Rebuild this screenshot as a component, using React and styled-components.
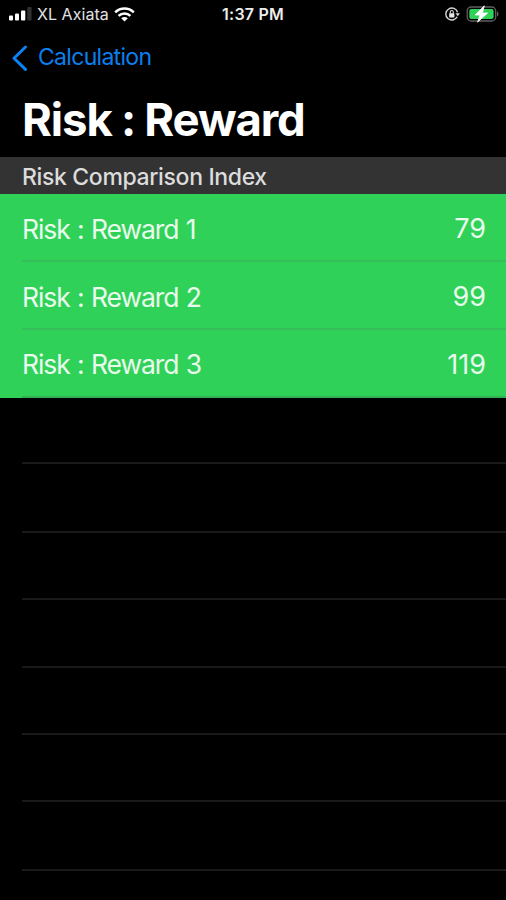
import React from 'react';
import styled, { createGlobalStyle } from 'styled-components';

const GlobalStyle = createGlobalStyle`
    body {
        margin: 0;
        background: #000;
        font-family: Inter, 'Liberation Sans', sans-serif;
    }
`

const Screen = styled.div`
    display: flex;
    flex-direction: column;
    width: 506px;
    height: 900px;
    overflow: hidden;
    background: #000;
    color: #fff;
`

const StatusBar = styled.div`
    display: grid;
    grid-template-columns: 1fr auto 1fr;
    align-items: center;
    height: 28px;
    padding: 0 7px 0 9px;
    box-sizing: border-box;
`

const StatusGroup = styled.div`
    display: flex;
    align-items: center;
    justify-content: ${props => props.$end ? 'flex-end' : 'flex-start'};
    gap: ${props => props.$gap}px;
`

const Carrier = styled.span`
    font-size: 16px;
    line-height: 28px;
    letter-spacing: 0.05px;
    color: #e2e2e2;
`

const Clock = styled.span`
    font-size: 16px;
    line-height: 28px;
    font-weight: 600;
    letter-spacing: 0.2px;
    margin-right: 2px;
    color: #ececec;
`

const BackButton = styled.button`
    display: flex;
    align-items: center;
    gap: 9px;
    height: 59px;
    padding: 0 0 0 11px;
    border: 0;
    background: none;
    color: #0a7fee;
    font-family: inherit;
    font-size: 23px;
    line-height: 59px;
    letter-spacing: -0.7px;
`

const Title = styled.h1`
    height: 70px;
    margin: 0;
    padding-left: 22px;
    font-size: 45.5px;
    line-height: 65px;
    font-weight: 700;
    letter-spacing: -1.1px;
    word-spacing: -0.4px;
    white-space: nowrap;
`

const SectionHeader = styled.h2`
    height: 37px;
    margin: 0;
    padding-left: 22px;
    background: #333334;
    color: #dcdcdc;
    font-size: 23px;
    line-height: 41px;
    font-weight: 500;
    letter-spacing: -0.35px;
    flex-shrink: 0;
`

const List = styled.div`
    display: flex;
    flex-direction: column;
    flex-shrink: 0;
    background: ${props => props.$filled ? '#30d158' : '#000'};
`

const Row = styled.div`
    display: flex;
    justify-content: space-between;
    align-items: center;
    box-sizing: border-box;
    height: ${props => props.$height}px;
    margin-left: 22px;
    padding-top: 3px;
    padding-right: 21px;
    border-bottom: 2px solid ${props => props.$line};
    font-size: 27px;
    color: #e9fbed;
`

const RowLabel = styled.span`
    font-size: 26.5px;
    letter-spacing: -1.1px;
    word-spacing: 1.1px;
`

const RowValue = styled.span`
    margin-right: -1px;
    letter-spacing: 0;
`

const SignalIcon = () => (
    <svg width="23" height="14" viewBox="0 0 23 14">
        <rect x="0" y="8.6" width="4" height="5" rx="1" fill="#fff" />
        <rect x="6" y="6.6" width="4" height="7" rx="1" fill="#fff" />
        <rect x="12" y="3.4" width="4.3" height="10.2" rx="1" fill="#fff" />
        <rect x="18.3" y="0" width="4.3" height="13.6" rx="1" fill="#303030" />
    </svg>
)

const WifiIcon = () => (
    <svg width="21" height="15" viewBox="0 0 21 15" fill="none" stroke="#fff" strokeWidth="2.5">
        <path d="M1.2 5.3C6.5.2 14.5.2 19.8 5.3" />
        <path d="M4.6 8.8c3.4-3.2 8.4-3.2 11.8 0" />
        <path d="M10.5 14.5L7.2 11.2c1.8-1.6 4.8-1.6 6.6 0z" fill="#fff" stroke="none" />
    </svg>
)

const LockIcon = () => (
    <svg width="15" height="14" viewBox="0 0 15 14" fill="none" stroke="#d8d8d8">
        <path d="M12.6 5.3A6 6 0 1 0 12.2 9.8" strokeWidth="1.4" />
        <path d="M10.5 6.2h4.4l-2.2 3z" fill="#d8d8d8" stroke="none" />
        <rect x="4.2" y="6.2" width="5.2" height="4.2" rx=".6" fill="#e8e8e8" stroke="none" />
        <path d="M5.3 6.5V5a1.5 1.5 0 0 1 3 0v1.5" strokeWidth="1.1" />
    </svg>
)

const BatteryIcon = () => (
    <svg width="33" height="18" viewBox="0 0 33 18">
        <rect x="1.2" y="2" width="28.5" height="14" rx="4" fill="#000" stroke="#5c605d" strokeWidth="1.3" />
        <rect x="3.3" y="4" width="24.3" height="10" rx="2" fill="#30d158" />
        <path d="M31 6.5c2 .7 2 4.3 0 5z" fill="#646464" />
        <path d="M18.3 .8L9.2 10h4.8l-2.4 7.2L21.6 8h-5.2z" fill="#fff" stroke="#fff" strokeWidth=".8" />
    </svg>
)

const BackIcon = () => (
    <svg width="18" height="28" viewBox="0 0 18 28" fill="none">
        <path d="M14.5 3L3 14.2 14.5 25.4" stroke="#0a84f5" strokeWidth="3" strokeLinecap="round" strokeLinejoin="round" />
    </svg>
)

const App = () => {

    const rewards = [
        { label: 'Risk : Reward 1', value: 79, height: 68, line: '#36be5b' },
        { label: 'Risk : Reward 2', value: 99, height: 68, line: '#36be5b' },
        { label: 'Risk : Reward 3', value: 119, height: 67.5, line: '#31b151' },
    ];

    const emptyRows = [66.5, 69, 67, 68, 67, 67, 69];

    return (
        <Screen>
            <GlobalStyle />
            <StatusBar>
                <StatusGroup $gap={5}>
                    <SignalIcon />
                    <Carrier>XL Axiata</Carrier>
                    <WifiIcon />
                </StatusGroup>
                <Clock>1:37 PM</Clock>
                <StatusGroup $gap={6} $end>
                    <LockIcon />
                    <BatteryIcon />
                </StatusGroup>
            </StatusBar>
            <BackButton>
                <BackIcon />
                Calculation
            </BackButton>
            <Title>Risk : Reward</Title>
            <SectionHeader>Risk Comparison Index</SectionHeader>
            <List $filled>
                {rewards.map(({ label, value, height, line }) => (
                    <Row key={label} $height={height} $line={line}>
                        <RowLabel>{label}</RowLabel>
                        <RowValue>{value}</RowValue>
                    </Row>
                ))}
            </List>
            <List>
                {emptyRows.map((height, i) => (
                    <Row key={i} $height={height} $line="#191919" />
                ))}
            </List>
        </Screen>
    )
};

export default App;
